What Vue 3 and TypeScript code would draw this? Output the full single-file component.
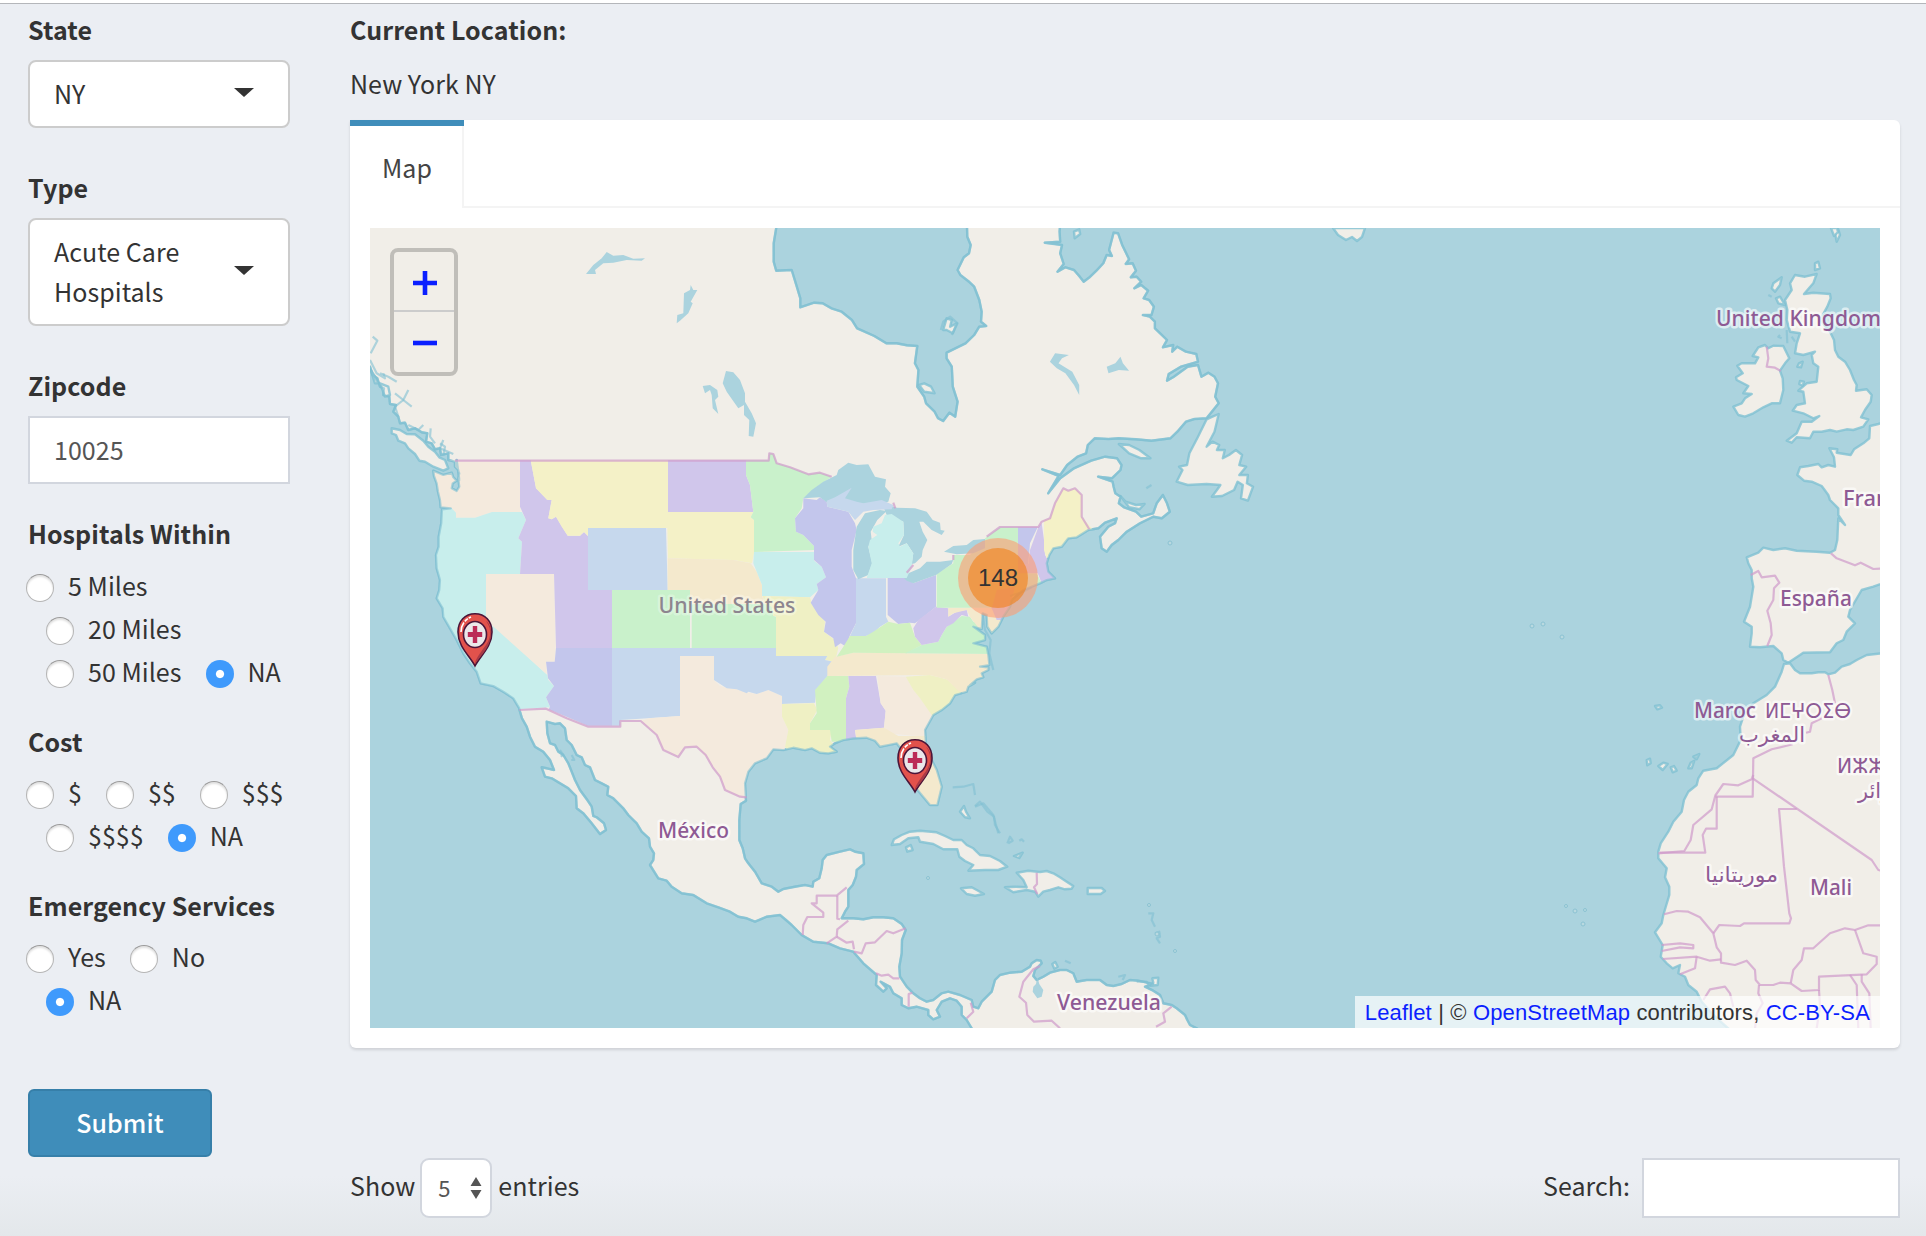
<script setup lang="ts">
import { ref } from 'vue'

type Tile = 'A' | 'W' | 'N' | 'E' | 'G' | 'F' | 'M' | 'C'
type Segment = [Tile, string]

// Each tile: origin x, origin y, units per pixel on x and y.
const tiles: Record<Tile, [number, number, number, number]> = {
  A: [340, 0, 3, 3],
  W: [360, 440, 3, 3],
  N: [740, 220, 2.904, 3],
  E: [740, 440, 3, 3],
  G: [1600, 220, 3, 3],
  F: [1600, 640, 3, 3],
  M: [500, 680, 3, 3],
  C: [900, 780, 3, 3],
}

function project(...segments: Segment[]): string {
  return segments
    .flatMap(([tile, points]) => {
      const [ox, oy, sx, sy] = tiles[tile]
      return points.split(' ').map((p) => {
        const [x, y] = p.split(',').map(Number)
        return `${(ox + x / sx).toFixed(1)},${(oy + y / sy).toFixed(1)}`
      })
    })
    .join(' ')
}

const america = project(
  ['A', '60,660 60,1080 90,1100 98,1125 112,1135 120,1160 132,1165 130,1185 148,1190 150,1212 168,1215 160,1235 175,1250 180,1270 195,1268 205,1290 225,1285 245,1297 262,1300 258,1325 275,1330 285,1348 300,1345 303,1365 325,1360 325,1380 345,1385 345,1400 355,1410 358,1440'],
  ['W', '290,60 290,80 298,100 295,115 298,140 290,153 275,145 278,130 290,122 280,112 275,98 250,105 220,92 222,108 230,130 234,155 240,180 242,202 272,205 246,208 244,250 236,290 236,320 228,345 230,385 240,420 238,450 230,475 248,505 250,530 270,565 290,600 310,640 330,670 350,695 362,730 400,738 430,755 460,775 478,805'],
  ['M', '58,88 66,115 80,140 90,170 105,200 130,215 150,240 162,270 140,265 125,262 135,290 155,295 180,310 205,325 228,348 230,385 250,400 275,430 300,462 318,450 312,430 290,412 280,408 275,380 262,360 240,330 225,300 215,275 205,250 190,225 175,215 165,195 150,190 142,160 140,125 165,132 180,130 195,145 200,180 215,195 230,225 245,232 255,255 270,262 285,300 305,310 325,320 322,345 340,355 370,385 385,405 410,430 425,455 447,475 450,500 462,520 460,540 450,555 475,595 500,602 515,620 545,640 580,645 620,670 655,682 690,695 715,710 740,715 765,725 800,710 840,705 858,720 875,735 905,765 940,785 985,790 1020,805 1060,815 1090,850 1130,885 1128,915 1150,935 1160,925 1142,905 1170,920 1180,940 1205,955 1205,975 1225,985 1250,980 1285,990 1285,1005 1300,1018 1320,1010 1310,990 1325,965 1350,955 1370,962 1385,980 1385,1005 1400,1020 1430,1070'],
  ['C', '930,770 890,745 870,735 862,720 855,705 830,685 815,675 790,670 780,645 760,632 735,620 760,612 715,602 690,600 665,612 640,618 620,615 600,600 560,600 530,605 520,580 500,570 480,570 450,578 430,590 410,600 400,588 405,570 425,550 422,542 410,540 395,550 390,560 365,575 330,578 300,585 285,600 275,635 260,650 245,665 235,685 220,680 215,660 180,645 145,635 125,640 100,660 80,665 60,655 40,640 20,620 0,590'],
  ['M', '1200,890 1198,860 1205,820 1206,780 1217,750 1205,732 1180,715 1150,712 1120,712 1090,718 1060,715 1025,715 1035,695 1045,680 1045,630 1058,615 1068,590 1070,570 1092,552 1090,520 1065,515 1050,508 1020,515 980,525 968,540 965,565 958,595 940,605 938,620 915,615 885,620 850,627 835,635 815,620 785,610 765,575 745,550 735,535 728,505 718,480 718,420 722,372 738,362 735,310 745,275 765,250 800,235 820,208 850,210 880,203 915,210 935,205 960,218 985,220 1010,215 990,200 1005,190 1030,180 1060,175 1100,173 1125,182 1140,200 1165,195 1190,190 1210,215 1240,300 1245,320 1265,345 1290,375 1312,375 1325,320 1310,270 1290,230 1278,195 1275,150 1300,105 1325,90 1350,70 1365,45 1400,35 1405,20 1425,8'],
  ['E', '690,735 710,718 730,712 725,700 745,690 745,682 720,680 748,675 745,645 740,620 700,610 735,600 735,585 700,560 725,567 728,520 740,525 742,560 755,580 775,560 790,530 810,500 815,480 850,450 900,430 920,420 945,415 925,395 920,370 928,345 940,325 965,320 985,295 1010,292 1045,270 1075,265 1095,248 1130,235 1125,250 1105,260 1080,290 1085,325 1100,335 1115,315 1135,300 1160,275 1200,250'],
  ['N', '1200,890 1225,895 1248,875 1240,850 1228,825 1210,850 1200,880 1165,890 1150,875 1115,862 1100,850 1105,830 1090,820 1085,800 1082,785 1040,770 1080,775 1105,750 1108,735 1095,715 1060,710 1020,722 970,745 930,775 895,820 925,768 878,748 930,765 950,735 980,710 1005,700 1010,675 1030,655 1070,657 1100,655 1150,658 1195,662 1250,655 1270,635 1295,605 1320,597 1355,595 1390,550 1380,530 1388,490 1378,470 1360,458 1340,470 1330,435 1300,440 1260,470 1240,482 1245,462 1280,440 1330,425 1325,402 1295,395 1270,380 1255,395 1258,375 1228,382 1240,360 1220,340 1205,325 1205,305 1190,290 1170,285 1195,285 1202,260 1188,240 1172,235 1185,212 1165,195 1145,205 1165,185 1152,170 1135,172 1150,152 1140,130 1120,132 1130,118 1110,75 1098,40 1085,38 1072,90 1080,108 1065,105 1055,130 1035,152 1015,172 998,185 985,168 970,150 945,142 922,155 940,132 930,100 935,75 885,68 930,65 928,35 932,-20 658,-20 660,50 670,75 665,100 650,112 632,150 640,165 665,185 680,200 695,240 702,275 700,305 715,318 695,320 680,345 655,370 600,398 600,415 615,440 618,500 632,545 625,590 608,578 590,603 575,595 565,575 540,550 535,530 515,500 518,450 508,430 515,378 485,376 455,370 425,370 390,348 340,325 325,300 295,275 265,265 240,250 215,248 175,262 175,235 165,200 150,150 105,152 98,125 98,70 105,24 105,-20'],
)

const islands: string[] = [
  project(['A', '155,1285 180,1290 200,1302 225,1303 250,1322 265,1340 285,1355 298,1372 315,1380 325,1405 310,1412 280,1400 255,1385 238,1382 225,1362 205,1345 195,1330 175,1322 168,1305 155,1300']),
  project(['A', '92,1110 105,1130 115,1150 105,1150']),
  project(['A', '120,1150 145,1160 150,1185 135,1190']),
  project(['N', '1355,598 1372,590 1390,582 1385,605 1378,635 1355,680 1372,665 1392,675 1385,690 1408,690 1402,715 1420,705 1440,690 1458,705 1450,735 1470,740 1450,765 1475,765 1472,790 1490,800 1475,842 1455,835 1460,795 1445,785 1435,810 1400,828 1370,830 1385,810 1395,795 1355,792 1300,795 1268,785 1285,750 1275,740 1298,735 1305,700 1330,650']),
  project(['N', '1100,672 1130,675 1160,690 1192,715 1165,715 1130,700']),
  project(['N', '1105,828 1120,845 1150,855 1175,852 1160,868 1130,862']),
  project(['N', '520,495 535,490 555,500 565,520 535,515']),
  project(['N', '590,330 600,295 615,300 610,320 630,310 618,340 600,330']),
  project(['N', '970,35 985,28 988,42 972,55']),
  project(['G', '585,165 615,170 650,162 640,190 612,222 640,218 690,222 692,235 682,260 660,300 690,335 702,360 705,390 715,410 735,425 750,450 762,480 770,495 768,512 800,508 815,525 812,545 795,570 783,592 805,598 790,620 760,630 740,628 710,635 690,630 665,635 640,635 630,655 590,652 575,668 560,662 590,640 605,605 635,605 658,588 640,595 610,580 578,572 590,555 615,550 610,515 595,512 620,490 650,485 655,440 640,430 635,405 645,395 610,405 585,400 590,370 600,340 570,335 560,300 562,270 555,240 575,210 570,190']),
  project(['G', '475,382 495,375 505,385 520,377 550,378 568,415 555,430 540,452 548,475 550,510 540,550 515,550 490,562 460,580 435,590 415,585 400,560 425,550 435,535 455,522 430,520 445,498 410,480 408,472 428,460 412,437 425,430 465,430 475,412 458,408']),
  project(['G', '520,190 545,172 540,195 525,215 515,205']),
  project(['G', '528,235 540,230 555,255 535,250']),
  project(['G', '597,430 608,425 603,442 592,440']),
  project(['G', '600,483 612,485 608,497 598,492']),
  project(['G', '645,130 655,125 660,145 645,150']),
  project(['G', '705,40 715,28 720,45 710,65']),
  project(['C', '-25,195 -18,178 5,165 30,155 60,152 110,157 135,168 160,180 185,180 200,195 220,205 240,225 270,228 300,243 322,260 295,270 255,270 205,272 220,255 195,243 178,230 172,208 130,208 100,192 60,185 55,172 25,175 0,192']),
  project(['C', '350,278 385,272 420,276 440,273 460,280 480,292 500,305 520,318 515,326 495,328 475,322 450,330 430,335 415,350 405,335 380,330 340,337 315,322 345,320 380,322 370,300']),
  project(['C', '183,325 215,322 252,342 225,347 200,342']),
  project(['C', '563,324 605,324 615,333 602,342 563,342']),
  project(['C', '18,202 32,195 38,210 22,215']),
  project(['C', '180,95 192,78 198,95 210,115 195,112']),
  project(['C', '342,228 368,218 358,234']),
  project(['C', '757,595 775,593 773,615 752,617 760,608']),
  project(['C', '457,552 466,546 473,560 463,566']),
  project(['F', '175,378 190,368 203,372 188,390']),
  project(['F', '212,382 222,378 230,392 218,397']),
  project(['F', '265,385 272,368 283,362 275,385']),
  project(['F', '280,350 298,342 290,358']),
  project(['F', '140,360 150,356 152,370 142,376']),
  project(['F', '165,198 180,196 186,203 172,208']),
]

const europe = project(
  ['G', '860,605 835,612 810,618 808,655 790,670 762,688 752,705 710,698 712,688 688,685 702,712 705,740 685,735 665,742 655,732 625,738 600,742 592,765 612,782 635,785 665,798 685,825 690,840 715,865 715,885 735,915 715,895 712,960 705,990 690,998 650,995 590,992 555,985 520,990 490,983 475,998 440,1012 445,1030 455,1050 455,1075 460,1100 450,1160 432,1205 455,1220 455,1240 450,1280 480,1282 520,1278 545,1300 550,1320 565,1328 600,1305 610,1298 690,1297 710,1270 730,1260 740,1235 765,1210 745,1190 750,1170 785,1110 820,1100 860,1085'],
)

const africa = project(
  ['F', '860,38 800,45 770,60 750,72 725,80 705,98 685,103 675,97 655,97 635,100 600,100 585,90 570,70 552,72 545,95 525,140 500,165 460,190 430,230 420,260 422,300 400,345 350,385 310,392 295,415 290,435 265,455 252,480 245,515 220,545 205,575 182,610 175,635 175,655 200,685 195,712 208,740 208,765 190,825 185,850 165,877 188,915 182,950 200,970 218,985 240,975 235,1000 255,1010 265,1035 290,1055 305,1085 340,1125 390,1170 860,1170'],
)

interface StateShape { fill: string; points: string }
const peach = '#f4eadd', cyan = '#c8eeec', violet = '#d0c6eb', yellow = '#f4f1c7', green = '#c9f1cb'
const blue = '#c6d8ed', indigo = '#c3c6ec', tan = '#f4e9cd', lime = '#d1f1c0', lemon = '#eff0c4'

const states: StateShape[] = [
  { fill: peach, points: project(['W', '200,61 480,61 480,216 396,216 345,233 288,233 288,218 275,205 200,205']) },
  { fill: cyan, points: project(['W', '200,205 275,205 288,218 288,233 345,233 396,216 486,216 498,240 475,295 486,305 480,402 378,402 378,535 562,705 565,720 582,738 558,772 570,802 470,808 200,808']) },
  { fill: peach, points: project(['W', '378,402 582,402 587,624 584,665 558,665 560,703 378,540']) },
  { fill: violet, points: project(['W', '480,61 512,61 528,145 562,180 575,180 565,235 575,238 588,230 623,287 660,287 672,276 684,288 684,450 756,450 756,624 588,624 582,402 480,402 486,305 475,295 498,240 480,200']) },
  { fill: yellow, points: project(['W', '512,61 924,61 924,264 684,264 684,288 672,276 660,287 623,287 605,260 588,230 575,238 565,235 575,180 562,180 528,145']) },
  { fill: blue, points: project(['W', '684,264 918,264 923,450 684,450']) },
  { fill: violet, points: project(['W', '924,61 1158,61 1158,105 1170,135 1180,216 924,216']) },
  { fill: yellow, points: project(['W', '921,216 1180,216 1172,232 1182,240 1182,340 1176,370 1120,360 924,355']) },
  { fill: tan, points: project(['W', '923,355 1120,360 1172,370 1190,395 1206,435 1206,468 1215,492 990,492 990,450 923,450']) },
  { fill: green, points: project(['W', '756,450 990,450 990,624 756,624']) },
  { fill: green, points: project(['W', '995,492 1225,492 1235,500 1240,528 1248,530 1248,624 995,624']) },
  { fill: green, points: project(['W', '1158,61 1226,61 1228,40 1240,42 1250,70 1290,82 1345,103 1380,98 1415,110 1370,140 1330,175 1325,205 1305,235 1308,275 1330,285 1362,318 1362,330 1182,336 1182,240 1172,232 1180,216 1170,135 1158,105']) },
  { fill: cyan, points: project(['W', '1182,336 1362,336 1362,362 1385,380 1398,412 1370,432 1375,450 1350,472 1206,468 1206,435 1180,370']) },
  { fill: lemon, points: project(['W', '1208,468 1350,472 1355,490 1395,545 1392,575 1425,600 1435,625 1425,665 1395,660 1402,648 1248,648 1248,528 1240,528 1235,500 1215,492']) },
  { fill: indigo, points: project(['W', '588,624 756,624 756,857 684,857 566,808 570,800 558,772 582,738 564,715 558,665 584,665']) },
  { fill: blue, points: project(['W', '756,624 960,624 960,828 840,836 780,840 780,857 756,857']) },
  { fill: peach, points: project(['W', '960,648 1062,648 1062,720 1080,738 1100,743 1130,748 1165,758 1190,762 1225,750 1266,768 1266,830 1285,870 1275,920 1275,980 1180,1074 1140,1070 1095,1050 1080,1010 1040,955 1010,920 975,920 955,950 910,930 890,885 840,843 870,835 960,828']) },
  { fill: blue, points: project(['W', '960,624 1248,624 1248,648 1402,648 1395,660 1420,665 1404,680 1404,706 1370,750 1365,788 1266,792 1266,768 1225,750 1190,762 1165,755 1160,760 1130,748 1100,745 1085,735 1062,720 1062,648 960,648']) },
  { fill: lemon, points: project(['W', '1266,792 1362,790 1372,810 1350,850 1350,870 1415,870 1410,900 1450,950 1300,960 1275,920 1285,870 1266,830']) },
  { fill: lime, points: project(['E', '262,708 325,708 328,740 318,775 318,905 275,905 270,870 210,870 210,850 230,820 225,750']) },
  { fill: violet, points: project(['E', '325,708 408,708 422,790 437,812 432,863 345,870 350,905 318,905 318,775 328,740']) },
  { fill: peach, points: project(['E', '412,708 497,710 520,750 540,775 580,828 558,890 440,880 432,863 437,812 422,790']) },
  { fill: tan, points: project(['E', '345,870 432,863 475,888 560,888 640,1000 620,1120 540,1120 440,960 350,905']) },
  { fill: lemon, points: project(['E', '497,710 570,705 620,718 665,755 590,840 575,825 540,775 520,750']) },
  { fill: tan, points: project(['E', '285,650 340,638 770,642 780,720 690,770 655,752 620,718 570,705 262,708 262,680']) },
  { fill: indigo, points: project(['E', '190,175 230,180 240,172 260,185 262,200 325,215 345,250 350,270 335,330 335,380 348,415 348,550 330,585 318,620 302,610 285,622 280,595 252,575 257,545 235,525 212,488 235,450 230,432 258,412 245,380 222,360 222,318 190,285 168,275 165,235 190,205']) },
  { fill: blue, points: project(['E', '348,415 438,415 438,530 445,545 420,560 400,580 378,588 330,588 348,550']) },
  { fill: indigo, points: project(['E', '443,413 500,413 520,430 588,405 588,500 545,535 525,550 510,548 475,552 443,525']) },
  { fill: lime, points: project(['E', '330,588 378,588 400,575 445,545 475,552 510,548 525,590 545,615 500,640 340,638 290,650 310,620']) },
  { fill: green, points: project(['E', '545,615 595,605 605,585 620,560 665,528 690,530 700,545 770,560 770,642 495,640']) },
  { fill: violet, points: project(['E', '588,500 625,505 625,530 655,512 680,510 685,530 665,525 640,550 620,560 605,585 595,605 545,615 525,590 520,565 535,540']) },
  { fill: tan, points: project(['E', '625,503 760,503 790,550 760,590 720,570 690,530 680,510 640,520 625,530']) },
  { fill: green, points: project(['E', '590,402 640,370 640,345 690,345 740,290 780,262 834,262 834,370 865,400 890,400 910,440 800,470 760,503 690,503 590,503']) },
  { fill: violet, points: project(['E', '770,450 825,440 800,540 770,540 755,505']) },
  { fill: indigo, points: project(['E', '834,262 893,262 870,310 865,372 834,372']) },
  { fill: violet, points: project(['E', '895,262 905,250 912,300 915,345 930,370 955,420 905,430 893,400 834,400 834,372 865,372 870,330']) },
  { fill: yellow, points: project(['E', '912,240 930,235 945,190 970,145 985,152 1005,145 1025,165 1025,230 1060,270 950,340 920,355 912,330']) },
]

const michiganUpper = project(['E', '260,182 285,172 335,143 315,175 350,185 370,190 425,180 460,195 455,208 400,210 370,215 345,240 325,215 262,200'])
const michiganLower = project(['E', '435,225 455,222 490,245 492,285 475,310 480,320 500,310 520,340 515,380 500,414 380,414 395,370 385,320 390,300 412,285 398,275 400,260 425,250'])

const lakes: string[] = [
  project(['E', '190,175 215,150 250,125 290,105 295,90 325,68 350,75 385,73 405,110 438,118 435,140 452,160 445,185 425,190 350,192 260,187 240,172']),
  project(['E', '440,213 420,210 375,220 350,260 340,330 340,390 355,418 385,405 397,370 385,320 395,300 392,275 412,240']),
  project(['E', '425,188 470,203 525,205 560,215 578,240 600,248 602,270 614,272 605,285 575,270 550,245 538,245 548,275 562,300 548,330 545,350 525,370 515,372 520,340 500,310 475,320 492,285 490,245 440,225']),
  project(['E', '490,412 505,400 540,385 560,365 600,365 640,360 635,372 588,405 520,430 500,422']),
  project(['E', '612,335 640,318 680,315 700,300 735,297 735,325 700,340 650,343']),
  project(['A', '738,822 760,795 785,775 800,756 820,767 850,765 880,776 915,775 905,782 860,780 820,788 790,790 765,810 768,822']),
  project(['A', '1010,970 1012,945 1030,940 1032,880 1050,870 1052,855 1060,870 1072,870 1052,905 1058,910 1045,940 1020,962']),
  project(['A', '1148,1150 1158,1113 1180,1117 1200,1140 1215,1180 1215,1205 1235,1240 1248,1270 1240,1310 1226,1308 1228,1260 1212,1245 1212,1215 1195,1225 1160,1175']),
  project(['A', '1088,1158 1110,1155 1132,1170 1135,1190 1125,1200 1135,1242 1118,1225 1115,1185 1110,1170 1095,1180']),
  project(['N', '900,425 915,400 955,405 935,415 925,430 965,455 985,495 985,525 970,495 945,460 920,445']),
  project(['N', '1065,440 1090,430 1105,410 1112,430 1130,452 1100,450 1070,460']),
  project(['C', '412,590 418,612 430,630 425,650 412,655 398,635 400,620 408,612']),
]

// Unfilled shore details: inlets, bays and reefs.
const shores: string[] = [
  project(['A', '120,1120 145,1130 170,1145']), project(['A', '205,1170 190,1200 215,1220']),
  project(['A', '165,1180 190,1200 165,1220 175,1250']), project(['A', '250,1275 235,1290 205,1275']),
  project(['A', '272,1285 270,1310 285,1330']), project(['A', '310,1320 300,1345 340,1362']),
  project(['A', '92,1060 112,1022 98,1010']), project(['A', '90,1080 110,1120 135,1135 130,1120']),
  project(['E', '810,468 850,455 875,442']), project(['E', '728,520 735,570 752,600 748,640 760,690']),
  project(['N', '583,330 590,305 610,290 632,310 615,345']),
  project(['M', '1358,322 1390,320 1420,312 1425,345']), project(['M', '1425,380 1450,370 1480,405 1495,460']),
  project(['C', '225,78 240,65 262,95 282,110 285,135 300,160']),
  project(['C', '322,190 330,170 338,182 325,190']), project(['C', '358,182 365,178 372,185']),
  project(['C', '745,400 760,400 755,420 765,440']), project(['C', '765,460 778,455 780,470 770,475 780,490']),
  project(['C', '710,605 740,605 745,615']), project(['C', '655,590 675,585 668,600']),
  project(['C', '495,542 512,550']), project(['N', '1180,805 1195,795']), project(['M', '180,210 190,225 182,230']),
  project(['M', '215,225 223,240 214,240']), project(['G', '540,345 535,350 545,355']),
  project(['G', '560,330 562,370']), project(['G', '575,350 585,365']), project(['G', '505,225 515,230']),
  project(['W', '240,10 255,20 250,45']),
]

const borders: string[] = [
  project(['W', '285,62 1226,62 1228,40 1240,42 1250,70 1290,82 1345,103 1380,98 1415,110']),
  project(['E', '640,345 640,360']), project(['E', '460,188 466,205']), project(['E', '500,398 520,375']),
  project(['E', '740,290 780,261 895,261 905,245 930,235 945,190 970,145 985,152 1005,145 1025,165 1025,230 1048,268']),
  project(['M', '58,90 138,86 200,115 265,140 361,140 361,123 422,123 470,165 490,210 535,231 555,202 590,200 617,225 638,262 660,290 675,330 720,350 740,352']),
  project(['M', '908,765 910,735 922,711 970,711 970,698 935,670 950,670 950,647 1010,647 1040,622']),
  project(['M', '1012,647 1012,716 1020,718']), project(['M', '1045,722 1012,748 1010,770 980,790']),
  project(['M', '1010,770 1040,788 1058,785 1062,808']), project(['M', '1062,815 1085,820 1097,790 1125,787 1160,753 1180,760 1217,745']),
  project(['M', '1128,880 1145,887 1165,884 1180,895 1198,895']), project(['M', '1237,938 1226,942 1226,980']),
  project(['M', '1412,968 1420,995 1400,1015']),
  project(['C', '420,558 400,568 370,605 358,650 378,668 382,705 402,725 455,722 480,745']),
  project(['C', '815,680 790,700 795,725 768,740']), project(['C', '410,278 411,312 402,322 412,342']),
  project(['G', '500,380 505,415 500,440 525,443 542,453']),
  project(['G', '452,1065 475,1053 485,1072 525,1067 538,1088 522,1105 520,1140 502,1172 512,1210 515,1245 502,1278']),
  project(['G', '693,1000 710,1015 765,1036 782,1028 820,1047 860,1045']),
  project(['F', '685,105 697,150 705,190']), project(['F', '665,235 635,250 630,275 618,278']),
  project(['F', '578,313 515,328 460,355 458,470 345,470 335,508 280,555 272,600 253,633 175,640']),
  project(['F', '350,470 350,566 318,566 308,585 316,638 180,638']),
  project(['F', '345,468 370,432 415,436 455,418 460,405']),
  project(['F', '458,415 815,660 835,690 860,695']),
  project(['F', '590,507 537,507 552,680 568,820 573,835 568,850 432,850 420,858 358,855 340,880']),
  project(['F', '192,823 230,813 265,815 300,832 340,880 350,922 363,940 363,968 405,975 440,962 465,990 467,1020 480,1035 520,1035 540,1028 572,1030']),
  project(['F', '185,915 240,910 280,915 280,925 240,922 185,933']),
  project(['F', '188,957 290,950 330,962 363,958']), project(['F', '290,950 285,985 240,1003']),
  project(['F', '310,1080 330,1048 375,1040 390,1060 400,1100']),
  project(['F', '477,1035 475,1060 488,1090 470,1120 465,1165']),
  project(['F', '572,1030 580,990 605,960 612,925 640,925 690,880 735,865 765,870 805,856 860,856']),
  project(['F', '765,870 790,940 830,950 830,972 800,1003 657,1010 657,1050 605,1053 572,1030']),
  project(['F', '657,1050 660,1100 650,1165']), project(['F', '750,1005 770,1035 775,1165']),
  project(['F', '785,1003 785,1025 808,1060 812,1165']),
]

interface MapLabel { text: string; x: number; y: number; w: number; muted?: boolean }
const labels: MapLabel[] = [
  { text: 'United States', x: 658.5, y: 612.5, w: 137, muted: true },
  { text: 'México', x: 658, y: 837.5, w: 71 },
  { text: 'Venezuela', x: 1057, y: 1010, w: 104 },
  { text: 'United Kingdom', x: 1716, y: 326, w: 165 },
  { text: 'France', x: 1843, y: 506, w: 70 },
  { text: 'España', x: 1780, y: 606, w: 72 },
  { text: 'Maroc', x: 1694, y: 717.5, w: 62 },
  { text: 'ⵍⵎⵖⵔⵉⴱ', x: 1765, y: 717.5, w: 86 },
  { text: 'المغرب', x: 1739, y: 742, w: 66 },
  { text: 'ⵍⵣⵣⴰⵢⴻⵔ', x: 1837, y: 772.5, w: 105 },
  { text: 'الجزائر', x: 1858, y: 798, w: 60 },
  { text: 'موريتانيا', x: 1705, y: 882, w: 73 },
  { text: 'Mali', x: 1810, y: 894.5, w: 42 },
]

const pins = [
  { x: 475, y: 613 },
  { x: 915, y: 739 },
]

interface RadioGroup { name: string; title: string; rows: string[][] }
const groups: RadioGroup[] = [
  { name: 'distance', title: 'Hospitals Within', rows: [['5 Miles'], ['20 Miles'], ['50 Miles', 'NA']] },
  { name: 'cost', title: 'Cost', rows: [['$', '$$', '$$$'], ['$$$$', 'NA']] },
  { name: 'emergency', title: 'Emergency Services', rows: [['Yes', 'No'], ['NA']] },
]
const picked = ref<Record<string, string>>({ distance: 'NA', cost: 'NA', emergency: 'NA' })
const zipcode = ref('10025')
const search = ref('')
</script>

<template>
  <div class="page">
    <aside class="filters">
      <div class="field">
        <h4>State</h4>
        <button class="picker" type="button"><span>NY</span><i class="caret" /></button>
      </div>
      <div class="field">
        <h4>Type</h4>
        <button class="picker" type="button"><span>Acute Care Hospitals</span><i class="caret" /></button>
      </div>
      <div class="field">
        <h4>Zipcode</h4>
        <input v-model="zipcode" class="zip" type="text" />
      </div>
      <fieldset v-for="g in groups" :key="g.name" class="radios">
        <h4>{{ g.title }}</h4>
        <div v-for="(row, i) in g.rows" :key="i" class="row">
          <label v-for="o in row" :key="o">
            <input v-model="picked[g.name]" type="radio" :name="g.name" :value="o" />
            <span>{{ o }}</span>
          </label>
        </div>
      </fieldset>
      <button class="submit" type="button">Submit</button>
    </aside>

    <main class="content">
      <h4>Current Location:</h4>
      <p>New York NY</p>
      <section class="card">
        <nav class="tabs"><a class="tab">Map</a></nav>
        <div class="map">
          <svg class="canvas" viewBox="370 228 1510 800" width="1510" height="800">
            <defs>
              <clipPath id="mainland"><polygon :points="america" /></clipPath>
            </defs>
            <g class="land">
              <polygon :points="america" />
              <polygon :points="europe" />
              <polygon :points="africa" />
              <polygon v-for="(p, i) in islands" :key="i" :points="p" />
              <path d="M1333 228l5 7 8 5 6-3 5 4 5-4 3-9zM1831 228l3 8 4-4-1-4z" />
            </g>
            <g clip-path="url(#mainland)">
              <polygon v-for="(s, i) in states" :key="i" :points="s.points" :fill="s.fill" />
            </g>
            <g class="lakes"><polygon v-for="(p, i) in lakes" :key="i" :points="p" /></g>
            <polygon :points="michiganUpper" fill="#c6d8ed" />
            <polygon :points="michiganLower" fill="#c8eeec" />
            <g class="shore">
              <polyline v-for="(p, i) in shores" :key="i" :points="p" />
              <polygon :points="america" />
            </g>
            <g class="borders"><polyline v-for="(p, i) in borders" :key="i" :points="p" /></g>
            <g class="specks">
              <circle cx="1170" cy="543" r="2" /><circle cx="1532" cy="626" r="2" />
              <circle cx="1543" cy="624" r="2" /><circle cx="1562" cy="637" r="2" />
              <circle cx="928" cy="878" r="1.5" /><circle cx="1566" cy="906" r="1.5" />
              <circle cx="1575" cy="911" r="2" /><circle cx="1585" cy="910" r="1.5" />
              <circle cx="1583" cy="924" r="2" /><circle cx="1149" cy="905" r="1.5" />
              <circle cx="1157" cy="934" r="2" /><circle cx="1175" cy="951" r="1.5" />
            </g>
            <g class="names">
              <text
                v-for="l in labels" :key="l.text" :x="l.x" :y="l.y" :class="{ muted: l.muted }"
                :textLength="l.w" lengthAdjust="spacingAndGlyphs"
              >{{ l.text }}</text>
            </g>
            <g class="cluster">
              <circle cx="998" cy="578" r="40" fill="rgba(253,156,115,.6)" />
              <circle cx="998" cy="578" r="30" fill="rgba(241,128,23,.6)" />
              <text x="998" y="586" text-anchor="middle">148</text>
            </g>
            <g v-for="p in pins" :key="p.x" :transform="`translate(${p.x} ${p.y})`">
              <path d="M0 53C-5 43-17 34-17 19C-17 8-10 .8 0 .8S17 8 17 19C17 34 5 43 0 53Z" fill="#e2524c" stroke="#4b1539" stroke-width="1.6" />
              <path d="M11 8C18 17 16 27 8 36C4 42 0 47 0 51C5 43 16 35 16 19C16 14 14 10 11 8Z" fill="#a93b46" />
              <path d="M-14 19C-14 11-9 6-4 4" fill="none" stroke="#fff" stroke-width="1.6" stroke-dasharray="10 1.5 4 1" />
              <ellipse cy="21.5" rx="11.5" ry="13" fill="#ebe8ea" stroke="#4b1539" stroke-width="1.6" />
              <path d="M-2.2 13h4.4v6h5v5h-5v6h-4.4v-6h-5v-5h5z" fill="#bb2b57" />
            </g>
          </svg>
          <div class="zoom">
            <button type="button" aria-label="Zoom in"><svg width="24" height="24"><path d="M0 12h24M12 0v24" /></svg></button>
            <button type="button" aria-label="Zoom out"><svg width="24" height="24"><path d="M0 12h24" /></svg></button>
          </div>
          <div class="credit"><a>Leaflet</a> | © <a>OpenStreetMap</a> contributors, <a>CC-BY-SA</a></div>
        </div>
      </section>
      <div class="table-bar">
        <div class="length">
          <span>Show</span>
          <button class="count" type="button"><span>5</span>
            <svg width="12" height="22" viewBox="0 0 12 22"><path d="M6 0l5.5 9H.5zM6 22l5.5-9H.5z" /></svg>
          </button>
          <span>entries</span>
        </div>
        <label class="search">Search:<input v-model="search" type="text" /></label>
      </div>
    </main>
  </div>
</template>

<style>
body {
  margin: 0;
  overflow: hidden;
}
</style>

<style scoped>
.page {
  box-sizing: border-box;
  display: flex;
  width: 1926px;
  height: 1236px;
  padding-top: 5px;
  border-top: 3px solid #fff;
  background:
    linear-gradient(#b4b6ba, #b4b6ba) 0 0 / 100% 1px no-repeat,
    linear-gradient(rgba(220, 225, 226, 0), rgba(220, 225, 226, 0.5)) 0 100% / 100% 60px no-repeat,
    #ebeef3;
  color: #333;
  font: 25px/40px 'Noto Sans CJK SC', 'Noto Sans', sans-serif;
  letter-spacing: 0.04px;
}
button,
input {
  box-sizing: border-box;
  margin: 0;
  font: inherit;
  color: inherit;
  letter-spacing: inherit;
}
h4 {
  margin: 0;
  font-size: 25px;
  font-weight: 700;
  line-height: 40px;
  letter-spacing: 0.08px;
}
.filters {
  width: 262px;
  margin-left: 28px;
  padding-top: 1px;
}
.field h4 {
  margin-bottom: 11px;
}
.field + .field {
  margin-top: 39px;
}
.picker {
  display: flex;
  align-items: center;
  justify-content: space-between;
  width: 262px;
  padding: 11px 34px 13px 24px;
  border: 2px solid #ccc;
  border-radius: 8px;
  background: #fff;
  text-align: left;
}
.picker span {
  width: 150px;
}
.caret {
  border: 10px solid transparent;
  border-top: 9px solid #333;
  border-bottom: 0;
  margin-top: -1px;
}
.zip {
  display: block;
  width: 262px;
  height: 68px;
  padding: 0 24px 2px;
  border: 2px solid #d2d6de;
  background: #fff;
  color: #555;
}
.radios {
  min-width: 0;
  margin: 26px 0 0;
  padding: 0;
  border: 0;
}
.field + .radios {
  margin-top: 29px;
}
.radios h4 {
  margin-bottom: 13px;
}
.radios + .radios h4 {
  margin-bottom: 12px;
}
.row {
  display: flex;
  gap: 24px;
  height: 43px;
  margin-left: 18px;
}
h4 + .row {
  margin-left: -2px;
}
.row label {
  display: flex;
  align-items: center;
  gap: 14px;
  white-space: nowrap;
}
.row span {
  padding-bottom: 6px;
}
.row input {
  appearance: none;
  width: 28px;
  height: 28px;
  border: 1px solid #b5b5b5;
  border-top-color: #9a9a9a;
  border-radius: 50%;
  background: #fff;
  box-shadow: inset 0 2px 2px rgba(0, 0, 0, 0.12);
}
.row input:checked {
  border: 0;
  background: radial-gradient(circle, #fff 3.6px, #3f9afc 4.6px);
  box-shadow: none;
}
.submit {
  display: block;
  width: 184px;
  height: 68px;
  margin-top: 66px;
  padding: 0 0 3px;
  border: 2px solid #367fa9;
  border-radius: 6px;
  background: #3f8dba;
  color: #fff;
  font-weight: 500;
}
.content {
  width: 1550px;
  margin-left: 60px;
  padding-top: 1px;
}
.content p {
  margin: 14px 0 17px;
}
.card {
  box-sizing: border-box;
  height: 928px;
  border-radius: 0 6px 6px;
  background: #fff;
  box-shadow: 0 2px 3px rgba(0, 0, 0, 0.12);
}
.tabs {
  display: flex;
  box-sizing: border-box;
  height: 88px;
  border-bottom: 2px solid #f4f4f4;
}
.tab {
  box-sizing: border-box;
  width: 114px;
  height: 88px;
  padding-left: 32px;
  background:
    linear-gradient(#3f8dba, #3f8dba) 0 0 / 100% 6px no-repeat,
    linear-gradient(#f4f4f4, #f4f4f4) 100% 0 / 2px 100% no-repeat,
    #fff;
  color: #444;
  line-height: 95px;
}
.map {
  position: relative;
  width: 1510px;
  height: 800px;
  margin: 20px;
  overflow: hidden;
  background: #abd3de;
}
.canvas {
  display: block;
}
.land {
  fill: #f1eee8;
  stroke: #80c0d2;
  stroke-opacity: 0.8;
  stroke-width: 2.4;
  stroke-linejoin: round;
}
.lakes {
  fill: #abd3de;
}
.shore {
  fill: none;
  stroke: #80c0d2;
  stroke-opacity: 0.6;
  stroke-width: 2.2;
  stroke-linejoin: round;
}
.borders {
  fill: none;
  stroke: #cf9acb;
  stroke-opacity: 0.7;
  stroke-width: 2.2;
  stroke-linejoin: round;
}
.specks {
  fill: #b9d9e0;
  stroke: #8bc3d3;
}
.names {
  fill: #8e5a94;
  stroke: rgba(255, 255, 255, 0.6);
  stroke-width: 5px;
  stroke-linejoin: round;
  paint-order: stroke;
  font: 500 21px 'Noto Sans', 'DejaVu Sans', sans-serif;
}
.names .muted {
  fill: #8d858f;
  stroke: rgba(255, 255, 255, 0.3);
}
.cluster text {
  fill: #333;
  font: 24px 'Liberation Sans', Arial, sans-serif;
}
.zoom {
  position: absolute;
  top: 20px;
  left: 20px;
  box-sizing: border-box;
  width: 68px;
  height: 128px;
  border: 4px solid rgba(0, 0, 0, 0.2);
  border-radius: 8px;
}
.zoom button {
  display: flex;
  align-items: center;
  justify-content: center;
  width: 60px;
  height: 60px;
  padding: 2px 0 0 2px;
  border: 0;
  background: none;
}
.zoom button:first-child {
  padding-top: 3px;
  border-bottom: 2px solid #ccc;
}
.zoom path {
  stroke: #0b1fff;
  stroke-width: 4.6;
}
.credit {
  position: absolute;
  right: 0;
  bottom: 0;
  height: 32px;
  padding: 0 10px;
  background: rgba(255, 255, 255, 0.7);
  font: 22px/33px 'Liberation Sans', Arial, sans-serif;
  letter-spacing: 0.15px;
  white-space: nowrap;
}
.credit a {
  color: #0b1fff;
}
.table-bar {
  display: flex;
  justify-content: space-between;
  height: 60px;
  margin-top: 110px;
  line-height: 54px;
}
.length,
.search {
  display: flex;
}
.count {
  display: flex;
  align-items: center;
  justify-content: space-between;
  width: 72px;
  height: 60px;
  margin: 0 6px 0 5px;
  padding: 0 8px 0 16px;
  border: 2px solid #d2d6de;
  border-radius: 9px;
  background: #fff;
  color: #555;
  font-size: 22px;
  line-height: 52px;
}
.count span {
  padding-bottom: 3px;
}
.count path {
  fill: #555;
}
.search input {
  width: 258px;
  height: 60px;
  margin-left: 12px;
  border: 2px solid #d2d6de;
  background: #fff;
}
</style>
